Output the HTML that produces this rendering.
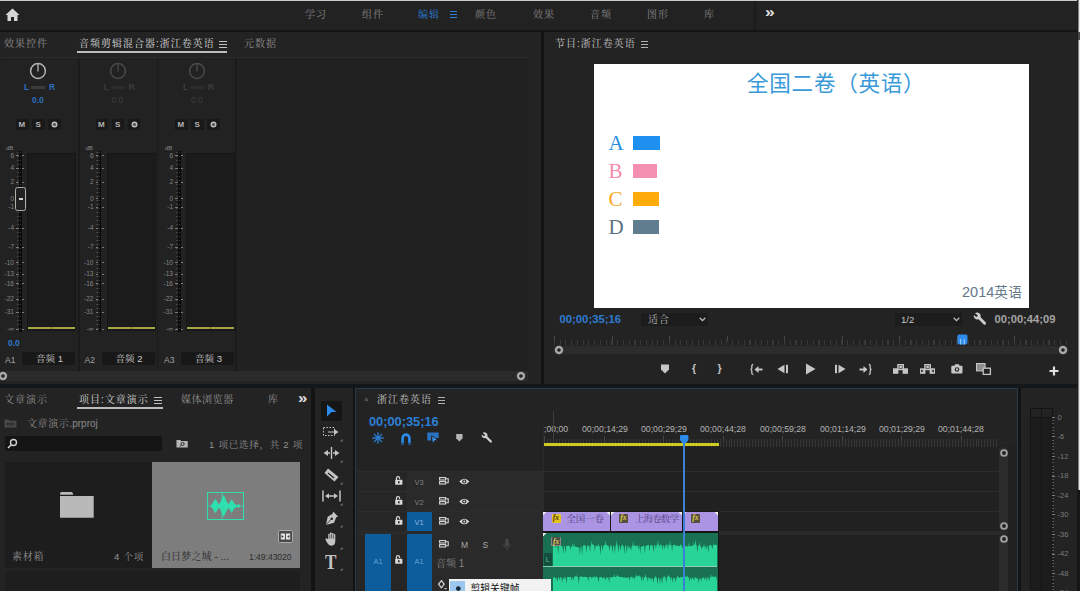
<!DOCTYPE html><html lang="zh"><head><meta charset="utf-8"><title>Premiere Pro</title><style>
*{margin:0;padding:0;box-sizing:border-box}
html,body{width:1080px;height:591px;overflow:hidden;background:#232323}
body{position:relative;font-family:"Liberation Sans","Noto Sans CJK SC",sans-serif;font-size:10px;color:#9a9a9a}
.a{position:absolute}
.t{position:absolute;white-space:nowrap;line-height:1}
.cj{font-family:"Liberation Sans","Noto Serif CJK SC",serif}
.sc{font-family:"Liberation Sans","Noto Sans CJK SC",sans-serif}
svg{position:absolute;overflow:visible}
</style></head><body>
<div class="a" style="left:0px;top:0px;width:1080px;height:31px;background:#222222;"></div>
<div class="a" style="left:0px;top:0px;width:1080px;height:1px;background:#c9c9c9;"></div>
<div class="a" style="left:0px;top:30px;width:1080px;height:2px;background:#141414;"></div>
<svg style="left:4.5px;top:8.3px" width="15" height="14" viewBox="0 0 15 14"><path d="M7.5 0.5 L14.5 7 H12.5 V13 H9 V9 H6 V13 H2.5 V7 H0.5 Z" fill="#d6d6d6"/></svg>
<div class="t cj" style="left:305px;top:9.5px;font-size:10px;color:#858585;letter-spacing:1px">学习</div>
<div class="t cj" style="left:362px;top:9.5px;font-size:10px;color:#858585;letter-spacing:1px">组件</div>
<div class="t cj" style="left:418px;top:9.5px;font-size:10px;color:#2a7fd8;letter-spacing:1px">编辑</div>
<div class="t cj" style="left:475px;top:9.5px;font-size:10px;color:#858585;letter-spacing:1px">颜色</div>
<div class="t cj" style="left:533px;top:9.5px;font-size:10px;color:#858585;letter-spacing:1px">效果</div>
<div class="t cj" style="left:590px;top:9.5px;font-size:10px;color:#858585;letter-spacing:1px">音频</div>
<div class="t cj" style="left:647px;top:9.5px;font-size:10px;color:#858585;letter-spacing:1px">图形</div>
<div class="t cj" style="left:704px;top:9.5px;font-size:10px;color:#858585;letter-spacing:1px">库</div>
<div class="a" style="left:450px;top:11px;width:7px;height:1px;background:#2a7fd8;"></div>
<div class="a" style="left:450px;top:14px;width:7px;height:1px;background:#2a7fd8;"></div>
<div class="a" style="left:450px;top:17px;width:7px;height:1px;background:#2a7fd8;"></div>
<div class="a" style="left:753.5px;top:1px;width:2px;height:29px;background:#1b1b1b;"></div>
<div class="t sc" style="left:765.3px;top:5.4px;font-size:14.5px;color:#e0e0e0;font-weight:bold;transform:scaleX(1.2);transform-origin:left top">»</div>
<div class="a" style="left:0px;top:32px;width:541px;height:351px;background:#232323;"></div>
<div class="t cj" style="left:4px;top:38.5px;font-size:10px;color:#8f8f8f;letter-spacing:1px">效果控件</div>
<div class="t cj" style="left:79px;top:38.5px;font-size:10px;color:#d8d8d8;letter-spacing:1px">音频剪辑混合器:浙江卷英语</div>
<div class="a" style="left:219px;top:41px;width:8px;height:1px;background:#c0c0c0;"></div>
<div class="a" style="left:219px;top:44px;width:8px;height:1px;background:#c0c0c0;"></div>
<div class="a" style="left:219px;top:47px;width:8px;height:1px;background:#c0c0c0;"></div>
<div class="a" style="left:77px;top:51px;width:150px;height:2px;background:#bcbcbc;"></div>
<div class="t cj" style="left:244px;top:38.5px;font-size:10px;color:#8f8f8f;letter-spacing:1px">元数据</div>
<div class="a" style="left:0px;top:57px;width:528px;height:314px;background:#212121;"></div>
<div class="a" style="left:0px;top:57px;width:528px;height:1px;background:#2a2a2a;"></div>
<div class="a" style="left:1.5px;top:58px;width:77px;height:313px;background:#222222;"></div>
<div class="a" style="left:78.0px;top:58px;width:1.5px;height:313px;background:#1b1b1b;"></div>
<svg style="left:29px;top:62px" width="18" height="18" viewBox="0 0 18 18"><circle cx="9" cy="9" r="7.4" fill="none" stroke="#b4b4b4" stroke-width="1.5"/><line x1="9" y1="1.5" x2="9" y2="9.5" stroke="#b4b4b4" stroke-width="1.3"/></svg>
<div class="t sc" style="left:24px;top:83px;font-size:8.5px;color:#2b6fbe;font-weight:bold">L</div>
<div class="t sc" style="left:49px;top:83px;font-size:8.5px;color:#2b6fbe;font-weight:bold">R</div>
<div class="a" style="left:31px;top:86px;width:14px;height:3px;background:#3c3c3c;"></div>
<div class="t sc" style="left:32px;top:96px;font-size:8.5px;color:#2b6fbe;font-weight:bold">0.0</div>
<div class="a" style="left:16px;top:118.7px;width:12.5px;height:11.3px;background:#191919;"></div>
<div class="t sc" style="left:18.5px;top:121px;font-size:8px;color:#b4b4b4;font-weight:bold">M</div>
<div class="a" style="left:32px;top:118.7px;width:12.5px;height:11.3px;background:#191919;"></div>
<div class="t sc" style="left:35.5px;top:121px;font-size:8px;color:#b4b4b4;font-weight:bold">S</div>
<div class="a" style="left:48px;top:118.7px;width:12.5px;height:11.3px;background:#191919;"></div>
<svg style="left:51px;top:121px" width="7" height="7" viewBox="0 0 7 7"><circle cx="3.5" cy="3.5" r="2.3" fill="#555" stroke="#bdbdbd" stroke-width="1.4"/></svg>
<div class="t sc" style="left:6px;top:145px;font-size:6px;color:#8a8a8a;">dB</div>
<div class="a" style="left:19px;top:151px;width:2.6px;height:181px;background:#0a0a0a;"></div>
<div class="a" style="left:16.5px;top:152px;width:7px;height:178px;background:repeating-linear-gradient(to bottom,#9a9a9a 0,#9a9a9a 1px,transparent 1px,transparent 4px);opacity:.3;clip-path:polygon(0 0,2px 0,2px 100%,0 100%)"></div>
<div class="a" style="left:19.8px;top:152px;width:1px;height:178px;background:repeating-linear-gradient(to bottom,#888 0,#888 1px,transparent 1px,transparent 4px);opacity:.45"></div>
<div class="t sc" style="left:0px;width:14px;text-align:right;top:152.7px;font-size:6.5px;color:#858585">6</div>
<div class="a" style="left:16px;top:155px;width:2.5px;height:1px;background:#7a7a7a;"></div>
<div class="a" style="left:22px;top:155px;width:2px;height:1px;background:#7a7a7a;"></div>
<div class="t sc" style="left:0px;width:14px;text-align:right;top:165.2px;font-size:6.5px;color:#858585">4</div>
<div class="a" style="left:16px;top:168px;width:2.5px;height:1px;background:#7a7a7a;"></div>
<div class="a" style="left:22px;top:168px;width:2px;height:1px;background:#7a7a7a;"></div>
<div class="t sc" style="left:0px;width:14px;text-align:right;top:179.2px;font-size:6.5px;color:#858585">2</div>
<div class="a" style="left:16px;top:182px;width:2.5px;height:1px;background:#7a7a7a;"></div>
<div class="a" style="left:22px;top:182px;width:2px;height:1px;background:#7a7a7a;"></div>
<div class="t sc" style="left:0px;width:14px;text-align:right;top:195.7px;font-size:6.5px;color:#858585">0</div>
<div class="a" style="left:16px;top:198px;width:2.5px;height:1px;background:#7a7a7a;"></div>
<div class="a" style="left:22px;top:198px;width:2px;height:1px;background:#7a7a7a;"></div>
<div class="t sc" style="left:0px;width:14px;text-align:right;top:204.2px;font-size:6.5px;color:#858585">-1</div>
<div class="a" style="left:16px;top:207px;width:2.5px;height:1px;background:#7a7a7a;"></div>
<div class="a" style="left:22px;top:207px;width:2px;height:1px;background:#7a7a7a;"></div>
<div class="t sc" style="left:0px;width:14px;text-align:right;top:225.2px;font-size:6.5px;color:#858585">-4</div>
<div class="a" style="left:16px;top:228px;width:2.5px;height:1px;background:#7a7a7a;"></div>
<div class="a" style="left:22px;top:228px;width:2px;height:1px;background:#7a7a7a;"></div>
<div class="t sc" style="left:0px;width:14px;text-align:right;top:244.2px;font-size:6.5px;color:#858585">-7</div>
<div class="a" style="left:16px;top:247px;width:2.5px;height:1px;background:#7a7a7a;"></div>
<div class="a" style="left:22px;top:247px;width:2px;height:1px;background:#7a7a7a;"></div>
<div class="t sc" style="left:0px;width:14px;text-align:right;top:259.7px;font-size:6.5px;color:#858585">-10</div>
<div class="a" style="left:16px;top:262px;width:2.5px;height:1px;background:#7a7a7a;"></div>
<div class="a" style="left:22px;top:262px;width:2px;height:1px;background:#7a7a7a;"></div>
<div class="t sc" style="left:0px;width:14px;text-align:right;top:271.2px;font-size:6.5px;color:#858585">-13</div>
<div class="a" style="left:16px;top:274px;width:2.5px;height:1px;background:#7a7a7a;"></div>
<div class="a" style="left:22px;top:274px;width:2px;height:1px;background:#7a7a7a;"></div>
<div class="t sc" style="left:0px;width:14px;text-align:right;top:280.7px;font-size:6.5px;color:#858585">-16</div>
<div class="a" style="left:16px;top:283px;width:2.5px;height:1px;background:#7a7a7a;"></div>
<div class="a" style="left:22px;top:283px;width:2px;height:1px;background:#7a7a7a;"></div>
<div class="t sc" style="left:0px;width:14px;text-align:right;top:296.2px;font-size:6.5px;color:#858585">-22</div>
<div class="a" style="left:16px;top:299px;width:2.5px;height:1px;background:#7a7a7a;"></div>
<div class="a" style="left:22px;top:299px;width:2px;height:1px;background:#7a7a7a;"></div>
<div class="t sc" style="left:0px;width:14px;text-align:right;top:309.2px;font-size:6.5px;color:#858585">-31</div>
<div class="a" style="left:16px;top:312px;width:2.5px;height:1px;background:#7a7a7a;"></div>
<div class="a" style="left:22px;top:312px;width:2px;height:1px;background:#7a7a7a;"></div>
<div class="t sc" style="left:0px;width:14px;text-align:right;top:326.2px;font-size:6.5px;color:#858585">-∞</div>
<div class="a" style="left:16px;top:329px;width:2.5px;height:1px;background:#7a7a7a;"></div>
<div class="a" style="left:22px;top:329px;width:2px;height:1px;background:#7a7a7a;"></div>
<div class="a" style="left:27px;top:153px;width:49px;height:178px;background:#161616;"></div>
<div class="a" style="left:28px;top:154px;width:47px;height:176px;background:#1b1b1b;"></div>
<div class="a" style="left:28px;top:327px;width:47px;height:2px;background:#a3a544;"></div>
<div class="a" style="left:51px;top:327px;width:1px;height:2px;background:#6c6e30;"></div>
<div class="a" style="left:15px;top:187px;width:11px;height:24px;border:1.3px solid #b0b0b0;border-radius:2.5px;background:#222"></div>
<div class="a" style="left:18.5px;top:198px;width:4px;height:1.5px;background:#d0d0d0;"></div>
<div class="t sc" style="left:5px;top:355.5px;font-size:8.5px;color:#a0a0a0;">A1</div>
<div class="a" style="left:22px;top:352px;width:53px;height:13px;background:#181818;"></div>
<div class="t cj" style="left:36px;top:354px;font-size:9.5px;color:#c8c8c8;">音频 1</div>
<div class="a" style="left:80px;top:58px;width:77px;height:313px;background:#222222;"></div>
<div class="a" style="left:156.5px;top:58px;width:1.5px;height:313px;background:#1b1b1b;"></div>
<svg style="left:108.5px;top:62px" width="18" height="18" viewBox="0 0 18 18"><circle cx="9" cy="9" r="7.4" fill="none" stroke="#4a4a4a" stroke-width="1.5"/><line x1="9" y1="1.5" x2="9" y2="9.5" stroke="#4a4a4a" stroke-width="1.3"/></svg>
<div class="t sc" style="left:103.5px;top:83px;font-size:8.5px;color:#3d3d3d;font-weight:bold">L</div>
<div class="t sc" style="left:128.5px;top:83px;font-size:8.5px;color:#3d3d3d;font-weight:bold">R</div>
<div class="a" style="left:110.5px;top:86px;width:14px;height:3px;background:#2c2c2c;"></div>
<div class="t sc" style="left:111.5px;top:96px;font-size:8.5px;color:#3d3d3d;">0.0</div>
<div class="a" style="left:95.5px;top:118.7px;width:12.5px;height:11.3px;background:#191919;"></div>
<div class="t sc" style="left:98.0px;top:121px;font-size:8px;color:#b4b4b4;font-weight:bold">M</div>
<div class="a" style="left:111.5px;top:118.7px;width:12.5px;height:11.3px;background:#191919;"></div>
<div class="t sc" style="left:115.0px;top:121px;font-size:8px;color:#b4b4b4;font-weight:bold">S</div>
<div class="a" style="left:127.5px;top:118.7px;width:12.5px;height:11.3px;background:#191919;"></div>
<svg style="left:130.5px;top:121px" width="7" height="7" viewBox="0 0 7 7"><circle cx="3.5" cy="3.5" r="2.3" fill="#555" stroke="#bdbdbd" stroke-width="1.4"/></svg>
<div class="t sc" style="left:85.5px;top:145px;font-size:6px;color:#8a8a8a;">dB</div>
<div class="a" style="left:98.5px;top:151px;width:2.6px;height:181px;background:#0a0a0a;"></div>
<div class="a" style="left:96.0px;top:152px;width:7px;height:178px;background:repeating-linear-gradient(to bottom,#9a9a9a 0,#9a9a9a 1px,transparent 1px,transparent 4px);opacity:.3;clip-path:polygon(0 0,2px 0,2px 100%,0 100%)"></div>
<div class="a" style="left:99.3px;top:152px;width:1px;height:178px;background:repeating-linear-gradient(to bottom,#888 0,#888 1px,transparent 1px,transparent 4px);opacity:.45"></div>
<div class="t sc" style="left:79.5px;width:14px;text-align:right;top:152.7px;font-size:6.5px;color:#858585">6</div>
<div class="a" style="left:95.5px;top:155px;width:2.5px;height:1px;background:#7a7a7a;"></div>
<div class="a" style="left:101.5px;top:155px;width:2px;height:1px;background:#7a7a7a;"></div>
<div class="t sc" style="left:79.5px;width:14px;text-align:right;top:165.2px;font-size:6.5px;color:#858585">4</div>
<div class="a" style="left:95.5px;top:168px;width:2.5px;height:1px;background:#7a7a7a;"></div>
<div class="a" style="left:101.5px;top:168px;width:2px;height:1px;background:#7a7a7a;"></div>
<div class="t sc" style="left:79.5px;width:14px;text-align:right;top:179.2px;font-size:6.5px;color:#858585">2</div>
<div class="a" style="left:95.5px;top:182px;width:2.5px;height:1px;background:#7a7a7a;"></div>
<div class="a" style="left:101.5px;top:182px;width:2px;height:1px;background:#7a7a7a;"></div>
<div class="t sc" style="left:79.5px;width:14px;text-align:right;top:195.7px;font-size:6.5px;color:#858585">0</div>
<div class="a" style="left:95.5px;top:198px;width:2.5px;height:1px;background:#7a7a7a;"></div>
<div class="a" style="left:101.5px;top:198px;width:2px;height:1px;background:#7a7a7a;"></div>
<div class="t sc" style="left:79.5px;width:14px;text-align:right;top:204.2px;font-size:6.5px;color:#858585">-1</div>
<div class="a" style="left:95.5px;top:207px;width:2.5px;height:1px;background:#7a7a7a;"></div>
<div class="a" style="left:101.5px;top:207px;width:2px;height:1px;background:#7a7a7a;"></div>
<div class="t sc" style="left:79.5px;width:14px;text-align:right;top:225.2px;font-size:6.5px;color:#858585">-4</div>
<div class="a" style="left:95.5px;top:228px;width:2.5px;height:1px;background:#7a7a7a;"></div>
<div class="a" style="left:101.5px;top:228px;width:2px;height:1px;background:#7a7a7a;"></div>
<div class="t sc" style="left:79.5px;width:14px;text-align:right;top:244.2px;font-size:6.5px;color:#858585">-7</div>
<div class="a" style="left:95.5px;top:247px;width:2.5px;height:1px;background:#7a7a7a;"></div>
<div class="a" style="left:101.5px;top:247px;width:2px;height:1px;background:#7a7a7a;"></div>
<div class="t sc" style="left:79.5px;width:14px;text-align:right;top:259.7px;font-size:6.5px;color:#858585">-10</div>
<div class="a" style="left:95.5px;top:262px;width:2.5px;height:1px;background:#7a7a7a;"></div>
<div class="a" style="left:101.5px;top:262px;width:2px;height:1px;background:#7a7a7a;"></div>
<div class="t sc" style="left:79.5px;width:14px;text-align:right;top:271.2px;font-size:6.5px;color:#858585">-13</div>
<div class="a" style="left:95.5px;top:274px;width:2.5px;height:1px;background:#7a7a7a;"></div>
<div class="a" style="left:101.5px;top:274px;width:2px;height:1px;background:#7a7a7a;"></div>
<div class="t sc" style="left:79.5px;width:14px;text-align:right;top:280.7px;font-size:6.5px;color:#858585">-16</div>
<div class="a" style="left:95.5px;top:283px;width:2.5px;height:1px;background:#7a7a7a;"></div>
<div class="a" style="left:101.5px;top:283px;width:2px;height:1px;background:#7a7a7a;"></div>
<div class="t sc" style="left:79.5px;width:14px;text-align:right;top:296.2px;font-size:6.5px;color:#858585">-22</div>
<div class="a" style="left:95.5px;top:299px;width:2.5px;height:1px;background:#7a7a7a;"></div>
<div class="a" style="left:101.5px;top:299px;width:2px;height:1px;background:#7a7a7a;"></div>
<div class="t sc" style="left:79.5px;width:14px;text-align:right;top:309.2px;font-size:6.5px;color:#858585">-31</div>
<div class="a" style="left:95.5px;top:312px;width:2.5px;height:1px;background:#7a7a7a;"></div>
<div class="a" style="left:101.5px;top:312px;width:2px;height:1px;background:#7a7a7a;"></div>
<div class="t sc" style="left:79.5px;width:14px;text-align:right;top:326.2px;font-size:6.5px;color:#858585">-∞</div>
<div class="a" style="left:95.5px;top:329px;width:2.5px;height:1px;background:#7a7a7a;"></div>
<div class="a" style="left:101.5px;top:329px;width:2px;height:1px;background:#7a7a7a;"></div>
<div class="a" style="left:106.5px;top:153px;width:49px;height:178px;background:#161616;"></div>
<div class="a" style="left:107.5px;top:154px;width:47px;height:176px;background:#1b1b1b;"></div>
<div class="a" style="left:107.5px;top:327px;width:47px;height:2px;background:#a3a544;"></div>
<div class="a" style="left:130.5px;top:327px;width:1px;height:2px;background:#6c6e30;"></div>
<div class="t sc" style="left:84.5px;top:355.5px;font-size:8.5px;color:#a0a0a0;">A2</div>
<div class="a" style="left:101.5px;top:352px;width:53px;height:13px;background:#181818;"></div>
<div class="t cj" style="left:115.5px;top:354px;font-size:9.5px;color:#c8c8c8;">音频 2</div>
<div class="a" style="left:158.5px;top:58px;width:77px;height:313px;background:#222222;"></div>
<div class="a" style="left:235.0px;top:58px;width:1.5px;height:313px;background:#1b1b1b;"></div>
<svg style="left:188px;top:62px" width="18" height="18" viewBox="0 0 18 18"><circle cx="9" cy="9" r="7.4" fill="none" stroke="#4a4a4a" stroke-width="1.5"/><line x1="9" y1="1.5" x2="9" y2="9.5" stroke="#4a4a4a" stroke-width="1.3"/></svg>
<div class="t sc" style="left:183px;top:83px;font-size:8.5px;color:#3d3d3d;font-weight:bold">L</div>
<div class="t sc" style="left:208px;top:83px;font-size:8.5px;color:#3d3d3d;font-weight:bold">R</div>
<div class="a" style="left:190px;top:86px;width:14px;height:3px;background:#2c2c2c;"></div>
<div class="t sc" style="left:191px;top:96px;font-size:8.5px;color:#3d3d3d;">0.0</div>
<div class="a" style="left:175px;top:118.7px;width:12.5px;height:11.3px;background:#191919;"></div>
<div class="t sc" style="left:177.5px;top:121px;font-size:8px;color:#b4b4b4;font-weight:bold">M</div>
<div class="a" style="left:191px;top:118.7px;width:12.5px;height:11.3px;background:#191919;"></div>
<div class="t sc" style="left:194.5px;top:121px;font-size:8px;color:#b4b4b4;font-weight:bold">S</div>
<div class="a" style="left:207px;top:118.7px;width:12.5px;height:11.3px;background:#191919;"></div>
<svg style="left:210px;top:121px" width="7" height="7" viewBox="0 0 7 7"><circle cx="3.5" cy="3.5" r="2.3" fill="#555" stroke="#bdbdbd" stroke-width="1.4"/></svg>
<div class="t sc" style="left:165px;top:145px;font-size:6px;color:#8a8a8a;">dB</div>
<div class="a" style="left:178px;top:151px;width:2.6px;height:181px;background:#0a0a0a;"></div>
<div class="a" style="left:175.5px;top:152px;width:7px;height:178px;background:repeating-linear-gradient(to bottom,#9a9a9a 0,#9a9a9a 1px,transparent 1px,transparent 4px);opacity:.3;clip-path:polygon(0 0,2px 0,2px 100%,0 100%)"></div>
<div class="a" style="left:178.8px;top:152px;width:1px;height:178px;background:repeating-linear-gradient(to bottom,#888 0,#888 1px,transparent 1px,transparent 4px);opacity:.45"></div>
<div class="t sc" style="left:159px;width:14px;text-align:right;top:152.7px;font-size:6.5px;color:#858585">6</div>
<div class="a" style="left:175px;top:155px;width:2.5px;height:1px;background:#7a7a7a;"></div>
<div class="a" style="left:181px;top:155px;width:2px;height:1px;background:#7a7a7a;"></div>
<div class="t sc" style="left:159px;width:14px;text-align:right;top:165.2px;font-size:6.5px;color:#858585">4</div>
<div class="a" style="left:175px;top:168px;width:2.5px;height:1px;background:#7a7a7a;"></div>
<div class="a" style="left:181px;top:168px;width:2px;height:1px;background:#7a7a7a;"></div>
<div class="t sc" style="left:159px;width:14px;text-align:right;top:179.2px;font-size:6.5px;color:#858585">2</div>
<div class="a" style="left:175px;top:182px;width:2.5px;height:1px;background:#7a7a7a;"></div>
<div class="a" style="left:181px;top:182px;width:2px;height:1px;background:#7a7a7a;"></div>
<div class="t sc" style="left:159px;width:14px;text-align:right;top:195.7px;font-size:6.5px;color:#858585">0</div>
<div class="a" style="left:175px;top:198px;width:2.5px;height:1px;background:#7a7a7a;"></div>
<div class="a" style="left:181px;top:198px;width:2px;height:1px;background:#7a7a7a;"></div>
<div class="t sc" style="left:159px;width:14px;text-align:right;top:204.2px;font-size:6.5px;color:#858585">-1</div>
<div class="a" style="left:175px;top:207px;width:2.5px;height:1px;background:#7a7a7a;"></div>
<div class="a" style="left:181px;top:207px;width:2px;height:1px;background:#7a7a7a;"></div>
<div class="t sc" style="left:159px;width:14px;text-align:right;top:225.2px;font-size:6.5px;color:#858585">-4</div>
<div class="a" style="left:175px;top:228px;width:2.5px;height:1px;background:#7a7a7a;"></div>
<div class="a" style="left:181px;top:228px;width:2px;height:1px;background:#7a7a7a;"></div>
<div class="t sc" style="left:159px;width:14px;text-align:right;top:244.2px;font-size:6.5px;color:#858585">-7</div>
<div class="a" style="left:175px;top:247px;width:2.5px;height:1px;background:#7a7a7a;"></div>
<div class="a" style="left:181px;top:247px;width:2px;height:1px;background:#7a7a7a;"></div>
<div class="t sc" style="left:159px;width:14px;text-align:right;top:259.7px;font-size:6.5px;color:#858585">-10</div>
<div class="a" style="left:175px;top:262px;width:2.5px;height:1px;background:#7a7a7a;"></div>
<div class="a" style="left:181px;top:262px;width:2px;height:1px;background:#7a7a7a;"></div>
<div class="t sc" style="left:159px;width:14px;text-align:right;top:271.2px;font-size:6.5px;color:#858585">-13</div>
<div class="a" style="left:175px;top:274px;width:2.5px;height:1px;background:#7a7a7a;"></div>
<div class="a" style="left:181px;top:274px;width:2px;height:1px;background:#7a7a7a;"></div>
<div class="t sc" style="left:159px;width:14px;text-align:right;top:280.7px;font-size:6.5px;color:#858585">-16</div>
<div class="a" style="left:175px;top:283px;width:2.5px;height:1px;background:#7a7a7a;"></div>
<div class="a" style="left:181px;top:283px;width:2px;height:1px;background:#7a7a7a;"></div>
<div class="t sc" style="left:159px;width:14px;text-align:right;top:296.2px;font-size:6.5px;color:#858585">-22</div>
<div class="a" style="left:175px;top:299px;width:2.5px;height:1px;background:#7a7a7a;"></div>
<div class="a" style="left:181px;top:299px;width:2px;height:1px;background:#7a7a7a;"></div>
<div class="t sc" style="left:159px;width:14px;text-align:right;top:309.2px;font-size:6.5px;color:#858585">-31</div>
<div class="a" style="left:175px;top:312px;width:2.5px;height:1px;background:#7a7a7a;"></div>
<div class="a" style="left:181px;top:312px;width:2px;height:1px;background:#7a7a7a;"></div>
<div class="t sc" style="left:159px;width:14px;text-align:right;top:326.2px;font-size:6.5px;color:#858585">-∞</div>
<div class="a" style="left:175px;top:329px;width:2.5px;height:1px;background:#7a7a7a;"></div>
<div class="a" style="left:181px;top:329px;width:2px;height:1px;background:#7a7a7a;"></div>
<div class="a" style="left:186px;top:153px;width:49px;height:178px;background:#161616;"></div>
<div class="a" style="left:187px;top:154px;width:47px;height:176px;background:#1b1b1b;"></div>
<div class="a" style="left:187px;top:327px;width:47px;height:2px;background:#a3a544;"></div>
<div class="a" style="left:210px;top:327px;width:1px;height:2px;background:#6c6e30;"></div>
<div class="t sc" style="left:164px;top:355.5px;font-size:8.5px;color:#a0a0a0;">A3</div>
<div class="a" style="left:181px;top:352px;width:53px;height:13px;background:#181818;"></div>
<div class="t cj" style="left:195px;top:354px;font-size:9.5px;color:#c8c8c8;">音频 3</div>
<div class="t sc" style="left:8px;top:338.5px;font-size:8.5px;color:#2d7bd0;font-weight:bold">0.0</div>
<div class="a" style="left:0px;top:371px;width:528px;height:9.5px;background:#2b2b2b;"></div>
<svg style="left:-1px;top:371.5px" width="8" height="8" viewBox="0 0 8 8"><circle cx="4" cy="4" r="3" fill="#232323" stroke="#a8a8a8" stroke-width="2.4"/></svg>
<svg style="left:517px;top:371.5px" width="8" height="8" viewBox="0 0 8 8"><circle cx="4" cy="4" r="3" fill="#232323" stroke="#a8a8a8" stroke-width="2.4"/></svg>
<div class="a" style="left:541px;top:32px;width:3px;height:353px;background:#131313;"></div>
<div class="a" style="left:0px;top:384px;width:1080px;height:4px;background:#14171a;"></div>
<div class="a" style="left:544px;top:32px;width:536px;height:351px;background:#232323;"></div>
<div class="t cj" style="left:555px;top:38.5px;font-size:10px;color:#c8c8c8;letter-spacing:1px">节目:浙江卷英语</div>
<div class="a" style="left:641px;top:41px;width:7px;height:1px;background:#b0b0b0;"></div>
<div class="a" style="left:641px;top:44px;width:7px;height:1px;background:#b0b0b0;"></div>
<div class="a" style="left:641px;top:47px;width:7px;height:1px;background:#b0b0b0;"></div>
<div class="a" style="left:594px;top:64px;width:435px;height:244px;background:#ffffff;"></div>
<div class="t sc" style="left:747px;top:72.5px;font-size:21.6px;color:#3a9ad9;letter-spacing:0.7px">全国二卷（英语）</div>
<div class="t" style="left:608.5px;top:133px;font-size:21px;color:#2a8fe0;font-family:'Liberation Serif',serif">A</div>
<div class="a" style="left:633px;top:136px;width:27px;height:14px;background:#1e90f0;"></div>
<div class="t" style="left:608.5px;top:161px;font-size:21px;color:#f28cab;font-family:'Liberation Serif',serif">B</div>
<div class="a" style="left:633px;top:164px;width:23.5px;height:14px;background:#f48fb1;"></div>
<div class="t" style="left:608.5px;top:188.5px;font-size:21px;color:#f6a821;font-family:'Liberation Serif',serif">C</div>
<div class="a" style="left:633px;top:191.5px;width:25.5px;height:14px;background:#ffab0a;"></div>
<div class="t" style="left:608.5px;top:217.0px;font-size:21px;color:#5a7383;font-family:'Liberation Serif',serif">D</div>
<div class="a" style="left:633px;top:219.5px;width:25.5px;height:14px;background:#5f7d8e;"></div>
<div class="t sc" style="left:962px;top:284.5px;font-size:14.5px;color:#64798a;">2014<span style="font-size:13.6px;letter-spacing:0.3px">英语</span></div>
<div class="t sc" style="left:559.5px;top:313.8px;font-size:11.3px;color:#2f7bd0;font-weight:bold">00;00;35;16</div>
<div class="a" style="left:641px;top:312.6px;width:66.5px;height:13.6px;background:#1c1c1c;"></div>
<div class="t cj" style="left:648px;top:314.5px;font-size:10px;color:#b4b4b4;letter-spacing:1px">适合</div>
<svg style="left:698.7px;top:316.8px" width="7" height="5" viewBox="0 0 7 5"><path d="M0.7 0.8 L3.5 3.6 L6.3 0.8" fill="none" stroke="#bcbcbc" stroke-width="1.3"/></svg>
<div class="a" style="left:895px;top:312.6px;width:66.5px;height:13.6px;background:#1c1c1c;"></div>
<div class="t sc" style="left:901px;top:314.5px;font-size:9.5px;color:#c4c4c4;">1/2</div>
<svg style="left:953px;top:316.8px" width="7" height="5" viewBox="0 0 7 5"><path d="M0.7 0.8 L3.5 3.6 L6.3 0.8" fill="none" stroke="#bcbcbc" stroke-width="1.3"/></svg>
<svg style="left:973px;top:312px" width="13" height="13" viewBox="0 0 13 13"><path d="M2 1.2 A3.6 3.6 0 0 1 7.6 5.2 L12.6 10.2 A1.3 1.3 0 0 1 10.6 12.2 L5.6 7.2 A3.6 3.6 0 0 1 0.8 3 L3.4 5 L5 3.6 Z" fill="#cfcfcf"/></svg>
<div class="t sc" style="left:994.5px;top:313.8px;font-size:11.2px;color:#a4a4a4;font-weight:bold">00;00;44;09</div>
<div class="a" style="left:553.5px;top:340px;width:516px;height:5px;background:repeating-linear-gradient(to right,#393939 0,#393939 1px,transparent 1px,transparent 5.75px)"></div>
<div class="a" style="left:553.5px;top:336px;width:516px;height:5px;background:repeating-linear-gradient(to right,#464646 0,#464646 1px,transparent 1px,transparent 57.5px)"></div>
<div class="a" style="left:553px;top:346px;width:516px;height:8px;background:#2c2c2c;border-radius:4px"></div>
<svg style="left:555px;top:346px" width="8" height="8" viewBox="0 0 8 8"><circle cx="4" cy="4" r="3" fill="#232323" stroke="#a8a8a8" stroke-width="2.4"/></svg>
<svg style="left:1059px;top:346px" width="8" height="8" viewBox="0 0 8 8"><circle cx="4" cy="4" r="3" fill="#232323" stroke="#a8a8a8" stroke-width="2.4"/></svg>
<svg style="left:957px;top:334px" width="11" height="11" viewBox="0 0 11 11"><path d="M0.5 2 Q0.5 0.5 2 0.5 H9 Q10.5 0.5 10.5 2 V8 Q10.5 10.5 8.5 10.5 H2.5 Q0.5 10.5 0.5 8 Z" fill="#2d8ceb"/><path d="M3.7 5 V10.5 M7.3 5 V10.5" stroke="#9fd0fa" stroke-width="1"/></svg>
<svg style="left:660px;top:364px" width="10" height="10" viewBox="0 0 10 10"><path d="M1 0.5 H9 V5.5 L5 9.5 L1 5.5 Z" fill="#c6c6c6"/></svg>
<div class="t sc" style="left:692px;top:363px;font-size:10.5px;color:#c6c6c6;font-weight:bold">{</div>
<div class="t sc" style="left:717.5px;top:363px;font-size:10.5px;color:#c6c6c6;font-weight:bold">}</div>
<svg style="left:750px;top:364px" width="13" height="11" viewBox="0 0 13 11"><path d="M3.2 0.5 Q1.8 0.5 1.8 2 V4 Q1.8 5.3 0.6 5.5 Q1.8 5.7 1.8 7 V9 Q1.8 10.5 3.2 10.5" fill="none" stroke="#c6c6c6" stroke-width="1.3"/><path d="M4.5 5.5 L8.5 2 V4.4 H12.5 V6.6 H8.5 V9 Z" fill="#c6c6c6"/></svg>
<svg style="left:777px;top:364px" width="12" height="10" viewBox="0 0 12 10"><path d="M0.5 5 L7.5 0.8 V9.2 Z" fill="#c6c6c6"/><rect x="9" y="0.8" width="2" height="8.4" fill="#c6c6c6"/></svg>
<svg style="left:805px;top:363px" width="11" height="12" viewBox="0 0 11 12"><path d="M1 0.5 L10.5 6 L1 11.5 Z" fill="#c6c6c6"/></svg>
<svg style="left:833.5px;top:364px" width="12" height="10" viewBox="0 0 12 10"><rect x="1" y="0.8" width="2" height="8.4" fill="#c6c6c6"/><path d="M4.5 0.8 L11.5 5 L4.5 9.2 Z" fill="#c6c6c6"/></svg>
<svg style="left:859px;top:364px" width="13" height="11" viewBox="0 0 13 11"><path d="M0.5 4.4 H4.5 V2 L8.5 5.5 L4.5 9 V6.6 H0.5 Z" fill="#c6c6c6"/><path d="M9.8 0.5 Q11.2 0.5 11.2 2 V4 Q11.2 5.3 12.4 5.5 Q11.2 5.7 11.2 7 V9 Q11.2 10.5 9.8 10.5" fill="none" stroke="#c6c6c6" stroke-width="1.3"/></svg>
<svg style="left:893px;top:363.6px" width="15" height="10" viewBox="0 0 15 10"><rect x="4.8" y="0.6" width="5.6" height="5" fill="#6a6a6a" stroke="#c6c6c6" stroke-width="1.2"/><rect x="0" y="4.3" width="5.4" height="5.5" fill="#c6c6c6"/><rect x="9.6" y="4.3" width="5.4" height="5.5" fill="#c6c6c6"/><rect x="6.6" y="2" width="2.2" height="2" fill="#c6c6c6"/></svg>
<svg style="left:920.3px;top:363.6px" width="15" height="10" viewBox="0 0 15 10"><rect x="4.8" y="0.6" width="5.6" height="5" fill="#6a6a6a" stroke="#c6c6c6" stroke-width="1.2"/><rect x="0" y="4.3" width="5.4" height="5.5" fill="#c6c6c6"/><rect x="9.6" y="4.3" width="5.4" height="5.5" fill="#c6c6c6"/><rect x="6.6" y="2" width="2.2" height="2" fill="#c6c6c6"/><path d="M1.2 5.6 L3.6 7 L1.2 8.4 Z M13.8 5.6 L11.4 7 L13.8 8.4 Z" fill="#232323"/></svg>
<svg style="left:950.8px;top:363.8px" width="12" height="10" viewBox="0 0 12 10"><path d="M1.2 1.8 H3.4 L4.2 0.3 H7.8 L8.6 1.8 H10.6 Q11.5 1.8 11.5 2.7 V8.6 Q11.5 9.5 10.6 9.5 H1.2 Q0.3 9.5 0.3 8.6 V2.7 Q0.3 1.8 1.2 1.8 Z" fill="#c6c6c6"/><circle cx="6" cy="5.5" r="2.3" fill="#232323"/><circle cx="6" cy="5.5" r="1.15" fill="#c6c6c6"/></svg>
<svg style="left:976px;top:363px" width="15" height="12" viewBox="0 0 15 12"><rect x="0.5" y="0.5" width="8.6" height="7.4" fill="#8e8e8e" stroke="#c6c6c6" stroke-width="1"/><rect x="7.2" y="5.2" width="7.2" height="6.2" fill="#232323" stroke="#c6c6c6" stroke-width="1.3"/></svg>
<svg style="left:1048.5px;top:366px" width="10" height="10" viewBox="0 0 10 10"><path d="M5 0.5 V9.5 M0.5 5 H9.5" stroke="#e0e0e0" stroke-width="2.2"/></svg>
<div class="a" style="left:0px;top:388px;width:311px;height:203px;background:#232323;"></div>
<div class="t cj" style="left:4px;top:394.5px;font-size:10px;color:#8f8f8f;letter-spacing:1px">文章演示</div>
<div class="t cj" style="left:79px;top:394.5px;font-size:10px;color:#d8d8d8;letter-spacing:1px">项目:文章演示</div>
<div class="a" style="left:154px;top:397px;width:8px;height:1px;background:#c0c0c0;"></div>
<div class="a" style="left:154px;top:400px;width:8px;height:1px;background:#c0c0c0;"></div>
<div class="a" style="left:154px;top:403px;width:8px;height:1px;background:#c0c0c0;"></div>
<div class="a" style="left:76.5px;top:406.5px;width:86px;height:2px;background:#bcbcbc;"></div>
<div class="t cj" style="left:181px;top:394.5px;font-size:10px;color:#8f8f8f;letter-spacing:0.55px">媒体浏览器</div>
<div class="t cj" style="left:268px;top:394.5px;font-size:10px;color:#8f8f8f;">库</div>
<div class="t sc" style="left:297.5px;top:391px;font-size:14px;color:#e0e0e0;font-weight:bold;transform:scaleX(1.2);transform-origin:left top">»</div>
<svg style="left:4px;top:418px" width="13" height="10" viewBox="0 0 13 10"><path d="M0.5 1.5 H4.5 L5.5 2.8 H12.5 V9.5 H0.5 Z" fill="#4a4a4a"/><rect x="2.5" y="4.5" width="8" height="3" fill="#333"/></svg>
<div class="t cj" style="left:27px;top:419px;font-size:10px;color:#8c8c8c;"><span style="letter-spacing:0.6px">文章演示</span>.prproj</div>
<div class="a" style="left:4.5px;top:436.3px;width:157px;height:14.6px;background:#141414;border-radius:2px"></div>
<svg style="left:7.3px;top:438px" width="11" height="11" viewBox="0 0 11 11"><circle cx="6.5" cy="4.5" r="3" fill="none" stroke="#d0d0d0" stroke-width="1.4"/><path d="M4.3 6.7 L1 10" stroke="#d0d0d0" stroke-width="1.6"/></svg>
<svg style="left:176px;top:438.8px" width="13" height="10" viewBox="0 0 13 10"><g transform="scale(0.94 0.9)"><path d="M0.5 1 H4.5 L5.5 2.3 H12.5 V9.5 H0.5 Z" fill="#b4b4b4"/><circle cx="7" cy="5.5" r="1.7" fill="none" stroke="#232323" stroke-width="1"/><path d="M5.8 6.8 L4 8.5" stroke="#232323" stroke-width="1"/></g></svg>
<div class="t cj" style="left:209px;top:439.5px;font-size:9.5px;color:#909090;letter-spacing:0.75px">1 项已选择，共 2 项</div>
<div class="a" style="left:5px;top:461.5px;width:147px;height:106.5px;background:#1d1d1d;"></div>
<svg style="left:60.3px;top:491.8px" width="34" height="26" viewBox="0 0 34 26"><path d="M0 1.5 Q0 0 1.5 0 H11.5 Q13 0 13.3 2.8 H0 Z" fill="#b9b9b9"/><path d="M0 4 H33.7 V25.8 H0 Z" fill="#b9b9b9"/></svg>
<div class="t cj" style="left:12px;top:551.5px;font-size:10px;color:#959595;letter-spacing:0.7px">素材箱</div>
<div class="t cj" style="left:114px;top:552px;font-size:9.5px;color:#959595;letter-spacing:0.8px">4 个项</div>
<div class="a" style="left:152px;top:461.5px;width:148px;height:106.5px;background:#7d7d7d;"></div>
<svg style="left:207px;top:492px" width="37" height="28" viewBox="0 0 37 28"><rect x="0.5" y="0.5" width="36" height="27" fill="none" stroke="#2fe0ae" stroke-width="1"/><path d="M0.5 14 H36.5 M15 0.5 V27.5" stroke="#2fe0ae" stroke-width="0.8"/><polygon points="4.0,13.0 5.2,12.0 6.3,10.0 7.4,8.0 8.6,7.0 9.8,9.0 10.9,11.0 12.0,12.0 13.2,11.0 14.3,8.0 15.5,5.0 16.6,3.0 17.8,5.0 18.9,8.0 20.1,10.0 21.2,12.0 22.4,11.0 23.5,9.0 24.7,7.0 25.8,9.0 27.0,11.0 28.1,12.0 29.3,13.0 30.4,13.0 31.6,12.0 32.8,13.0 32.8,15.0 31.6,16.0 30.4,15.0 29.3,15.0 28.1,16.0 27.0,17.0 25.8,19.0 24.7,21.0 23.5,19.0 22.4,17.0 21.2,16.0 20.1,18.0 18.9,20.0 17.8,23.0 16.6,25.0 15.5,23.0 14.3,20.0 13.2,17.0 12.0,16.0 10.9,17.0 9.8,19.0 8.6,21.0 7.4,20.0 6.3,18.0 5.2,16.0 4.0,15.0" fill="#2fe0ae"/></svg>
<svg style="left:278px;top:530px" width="15" height="13" viewBox="0 0 15 13"><rect x="0.5" y="0.5" width="14" height="12" rx="1.2" fill="#4a4a4a" stroke="#b4b4b4" stroke-width="0.9"/><rect x="2.8" y="3.5" width="4.2" height="6" fill="#e4e4e4"/><rect x="8" y="3.5" width="4.2" height="6" fill="#e4e4e4"/><path d="M3.6 5 L5.8 6.5 L3.6 8 Z M11.4 5 L9.2 6.5 L11.4 8 Z" fill="#3a3a3a"/></svg>
<div class="t cj" style="left:161px;top:551.5px;font-size:10px;color:#2c2c2c;letter-spacing:0.1px">白日梦之城 - ...</div>
<div class="t sc" style="left:249px;top:552.5px;font-size:8.5px;color:#2c2c2c;">1:49:43020</div>
<div class="a" style="left:5px;top:570.5px;width:295px;height:20.5px;background:#1e1e1e;"></div>
<div class="a" style="left:311px;top:388px;width:3.6px;height:203px;background:#131313;"></div>
<div class="a" style="left:314.6px;top:388px;width:38.4px;height:203px;background:#232323;"></div>
<div class="a" style="left:352.5px;top:388px;width:2.5px;height:203px;background:#131313;"></div>
<div class="a" style="left:321px;top:401px;width:21px;height:20px;background:#161616;border-radius:2px"></div>
<svg style="left:326px;top:404px" width="11" height="14" viewBox="0 0 11 14"><path d="M1 0.5 L10.5 8 H5.5 L1 12.5 Z" fill="#2d8ceb"/></svg>
<svg style="left:323px;top:427px" width="18" height="12" viewBox="0 0 18 12"><rect x="0.5" y="0.5" width="11" height="8" fill="none" stroke="#c4c4c4" stroke-width="1" stroke-dasharray="1.5 1.5"/><path d="M5 4.5 H11 V2 L15.5 5 L11 8 V5.5 H5 Z" fill="#c4c4c4"/></svg>
<svg style="left:323px;top:447px" width="17" height="12" viewBox="0 0 17 12"><path d="M8.5 0 V12" stroke="#c4c4c4" stroke-width="1.4"/><path d="M0.5 6 L5 3 V5.2 H7 V6.8 H5 V9 Z M16.5 6 L12 3 V5.2 H10 V6.8 H12 V9 Z" fill="#c4c4c4"/></svg>
<svg style="left:324px;top:468px" width="15" height="14" viewBox="0 0 15 14"><path d="M4 0.5 L14.5 9 L10.5 13.5 L0.5 5 Z" fill="#c4c4c4"/><path d="M4 5 L10 10" stroke="#232323" stroke-width="1.2"/></svg>
<svg style="left:322px;top:490px" width="19" height="12" viewBox="0 0 19 12"><path d="M1 0.5 V11.5 M18 0.5 V11.5" stroke="#c4c4c4" stroke-width="1.5"/><path d="M3 6 L7 3.2 V5.3 H12 V3.2 L16 6 L12 8.8 V6.7 H7 V8.8 Z" fill="#c4c4c4"/></svg>
<svg style="left:324.5px;top:510.8px" width="15" height="16" viewBox="0 0 15 16"><g transform="scale(0.9)"><path d="M9 0.5 L14.5 6 L12.5 7 L10 13 L1 15.5 L3 6.5 L8.5 3 Z" fill="#c4c4c4"/><circle cx="7.5" cy="8.5" r="1.4" fill="#232323"/><path d="M1 15.5 L7 9" stroke="#232323" stroke-width="0.9"/></g></svg>
<svg style="left:325px;top:532px" width="15" height="16" viewBox="0 0 15 16"><g transform="scale(0.92 0.88)"><path d="M3.5 8 V3 Q3.5 2 4.4 2 Q5.3 2 5.3 3 V1.5 Q5.3 0.5 6.3 0.5 Q7.3 0.5 7.3 1.5 V2 Q7.3 1 8.3 1 Q9.3 1 9.3 2 V3 Q9.3 2.2 10.2 2.2 Q11.2 2.2 11.2 3.2 V10 Q11.2 15.5 7 15.5 Q4 15.5 2.5 12.5 L0.5 8.5 Q0.2 7.5 1.2 7.2 Q2 7 2.6 8 Z" fill="#c4c4c4"/><path d="M5.3 3 V7.5 M7.3 2 V7.5 M9.3 3 V7.5" stroke="#232323" stroke-width="0.7"/></g></svg>
<div class="t" style="left:324.8px;top:551.5px;font-size:20px;font-weight:bold;color:#c4c4c4;transform:scaleX(0.86);transform-origin:left top;font-family:'Liberation Serif',serif">T</div>
<svg style="left:339.5px;top:439px" width="3" height="3" viewBox="0 0 3 3"><path d="M2.6 0 V2.6 H0 Z" fill="#767676"/></svg>
<svg style="left:339.5px;top:460px" width="3" height="3" viewBox="0 0 3 3"><path d="M2.6 0 V2.6 H0 Z" fill="#767676"/></svg>
<svg style="left:339.5px;top:482px" width="3" height="3" viewBox="0 0 3 3"><path d="M2.6 0 V2.6 H0 Z" fill="#767676"/></svg>
<svg style="left:339.5px;top:503px" width="3" height="3" viewBox="0 0 3 3"><path d="M2.6 0 V2.6 H0 Z" fill="#767676"/></svg>
<svg style="left:339.5px;top:524.5px" width="3" height="3" viewBox="0 0 3 3"><path d="M2.6 0 V2.6 H0 Z" fill="#767676"/></svg>
<svg style="left:339.5px;top:546.5px" width="3" height="3" viewBox="0 0 3 3"><path d="M2.6 0 V2.6 H0 Z" fill="#767676"/></svg>
<svg style="left:339.5px;top:567.5px" width="3" height="3" viewBox="0 0 3 3"><path d="M2.6 0 V2.6 H0 Z" fill="#767676"/></svg>
<div class="a" style="left:355px;top:388px;width:663px;height:203px;background:#232323;border:1px solid #283a4c;border-bottom:none"></div>
<div class="t sc" style="left:364px;top:395.5px;font-size:8px;color:#7a7a7a;">×</div>
<div class="t cj" style="left:377px;top:394.5px;font-size:10px;color:#c8c8c8;letter-spacing:1px">浙江卷英语</div>
<div class="a" style="left:438px;top:397px;width:7px;height:1px;background:#b0b0b0;"></div>
<div class="a" style="left:438px;top:400px;width:7px;height:1px;background:#b0b0b0;"></div>
<div class="a" style="left:438px;top:403px;width:7px;height:1px;background:#b0b0b0;"></div>
<div class="t sc" style="left:369px;top:415.5px;font-size:12.8px;color:#2d7fd6;font-weight:bold">00;00;35;16</div>
<svg style="left:372px;top:432px" width="12" height="12" viewBox="0 0 12 12"><path d="M6 0.3 V11.7 M0.3 6 H11.7 M2 2 L10 10 M10 2 L2 10" stroke="#2a78cc" stroke-width="1.35"/><circle cx="6" cy="6" r="1.6" fill="#2a78cc"/></svg>
<svg style="left:400.5px;top:433px" width="10" height="12" viewBox="0 0 10 12"><path d="M1.6 11.4 V5 A3.4 3.4 0 0 1 8.4 5 V11.4" fill="none" stroke="#2d8ceb" stroke-width="2.6"/><path d="M0.3 9.6 H2.9 V11.6 H0.3 Z M7.1 9.6 H9.7 V11.6 H7.1 Z" fill="#1a4f8a"/></svg>
<svg style="left:426.5px;top:432px" width="12" height="12" viewBox="0 0 12 12"><path d="M0.3 0.5 H11.7 V6 H7 V4 H4 V8.5 H0.3 Z" fill="#2a74c4"/><path d="M4.6 3.6 L11 8.4 H7.8 L5.6 11.4 Z" fill="#3a9af5" stroke="#232323" stroke-width="0.7"/></svg>
<svg style="left:456.3px;top:434.3px" width="7" height="8" viewBox="0 0 7 8"><path d="M0.2 0 H6.5 V4.2 L3.35 7.4 L0.2 4.2 Z" fill="#b4b4b4"/></svg>
<svg style="left:481px;top:432.3px" width="11" height="11" viewBox="0 0 13 13"><path d="M2 1.2 A3.6 3.6 0 0 1 7.6 5.2 L12.6 10.2 A1.3 1.3 0 0 1 10.6 12.2 L5.6 7.2 A3.6 3.6 0 0 1 0.8 3 L3.4 5 L5 3.6 Z" fill="#cfcfcf"/></svg>
<div class="a" style="left:543px;top:446px;width:474px;height:145px;background:#212121;"></div>
<div class="a" style="left:357px;top:471px;width:186px;height:120px;background:#2a2a2a;"></div>
<div class="a" style="left:357px;top:471px;width:49.5px;height:120px;background:#262626;"></div>
<div class="a" style="left:357px;top:470.5px;width:642px;height:1px;background:#2d2d2d;"></div>
<div class="a" style="left:357px;top:490.5px;width:642px;height:1px;background:#2d2d2d;"></div>
<div class="a" style="left:357px;top:510.5px;width:642px;height:1px;background:#2d2d2d;"></div>
<div class="a" style="left:357px;top:531px;width:651px;height:4px;background:#2a2a2a;"></div>
<div class="a" style="left:543px;top:425px;width:1px;height:166px;background:#2b2b2b;"></div>
<div class="t sc" style="left:544px;top:424.7px;font-size:8.7px;color:#b4b4b4;">;00;00</div>
<div class="t sc" style="left:582px;top:424.7px;font-size:8.7px;color:#b4b4b4;">00;00;14;29</div>
<div class="t sc" style="left:641px;top:424.7px;font-size:8.7px;color:#b4b4b4;">00;00;29;29</div>
<div class="t sc" style="left:700px;top:424.7px;font-size:8.7px;color:#b4b4b4;">00;00;44;28</div>
<div class="t sc" style="left:760px;top:424.7px;font-size:8.7px;color:#b4b4b4;">00;00;59;28</div>
<div class="t sc" style="left:820px;top:424.7px;font-size:8.7px;color:#b4b4b4;">00;01;14;29</div>
<div class="t sc" style="left:879px;top:424.7px;font-size:8.7px;color:#b4b4b4;">00;01;29;29</div>
<div class="t sc" style="left:938px;top:424.7px;font-size:8.7px;color:#b4b4b4;">00;01;44;28</div>
<div class="a" style="left:544px;top:439px;width:454px;height:8px;background:repeating-linear-gradient(to right,#383838 0,#383838 1px,transparent 1px,transparent 2.976px)"></div>
<div class="a" style="left:544px;top:436px;width:454px;height:6px;background:repeating-linear-gradient(to right,#454545 0,#454545 1px,transparent 1px,transparent 59.52px)"></div>
<div class="a" style="left:553px;top:411px;width:1px;height:32px;background:#3e3e3e;"></div>
<div class="a" style="left:544px;top:443.3px;width:175px;height:2.5px;background:#cccb22;"></div>
<div class="a" style="left:543px;top:511px;width:176px;height:20px;background:#1a1a1a;"></div>
<div class="a" style="left:543px;top:511.5px;width:66.5px;height:19px;background:#ab94e4;border-radius:2px 2px 0 0"></div>
<svg style="left:543px;top:511.5px" width="4" height="4" viewBox="0 0 4 4"><path d="M0 0 H3.5 L0 3.5 Z" fill="#efefef"/></svg>
<svg style="left:605.5px;top:511.5px" width="4" height="4" viewBox="0 0 4 4"><path d="M4 0 H0.5 L4 3.5 Z" fill="#efefef"/></svg>
<div class="a" style="left:610.5px;top:511.5px;width:71.5px;height:19px;background:#ab94e4;border-radius:2px 2px 0 0"></div>
<svg style="left:610.5px;top:511.5px" width="4" height="4" viewBox="0 0 4 4"><path d="M0 0 H3.5 L0 3.5 Z" fill="#efefef"/></svg>
<svg style="left:678.0px;top:511.5px" width="4" height="4" viewBox="0 0 4 4"><path d="M4 0 H0.5 L4 3.5 Z" fill="#efefef"/></svg>
<div class="a" style="left:683px;top:511.5px;width:35px;height:19px;background:#ab94e4;border-radius:2px 2px 0 0"></div>
<svg style="left:683px;top:511.5px" width="4" height="4" viewBox="0 0 4 4"><path d="M0 0 H3.5 L0 3.5 Z" fill="#efefef"/></svg>
<svg style="left:714px;top:511.5px" width="4" height="4" viewBox="0 0 4 4"><path d="M4 0 H0.5 L4 3.5 Z" fill="#efefef"/></svg>
<div class="a" style="left:551.5px;top:514px;width:9px;height:9px;background:#e6c420;border-radius:1px"></div>
<div class="t" style="left:552.7px;top:514.3px;font-size:7.5px;color:#4a3a00;font-family:'Liberation Serif',serif;font-style:italic;font-weight:bold">fx</div>
<div class="t cj" style="left:566.5px;top:513.5px;font-size:9.5px;color:#4d4380;letter-spacing:-0.2px">全国一卷</div>
<div class="a" style="left:619px;top:514px;width:9px;height:9px;background:#55503e;border-radius:1px"></div>
<div class="t" style="left:620.2px;top:514.3px;font-size:7.5px;color:#e0cc50;font-family:'Liberation Serif',serif;font-style:italic;font-weight:bold">fx</div>
<div class="a" style="left:691px;top:514px;width:9px;height:9px;background:#55503e;border-radius:1px"></div>
<div class="t" style="left:692.2px;top:514.3px;font-size:7.5px;color:#e0cc50;font-family:'Liberation Serif',serif;font-style:italic;font-weight:bold">fx</div>
<div class="t cj" style="left:635px;top:513.5px;font-size:9.5px;color:#4d4380;letter-spacing:-0.9px">上海卷数学</div>
<div class="a" style="left:543px;top:531px;width:176px;height:60px;background:#161616;"></div>
<div class="a" style="left:543px;top:533px;width:175px;height:58px;background:#197052;"></div>
<svg style="left:553px;top:533px;overflow:hidden" width="165" height="33" viewBox="0 0 165 33"><rect width="165" height="33" fill="#197052"/><path d="M0 33 L0.0 12.3 L0.6 8.9 L1.2 12.3 L1.9 12.6 L2.6 15.3 L3.3 12.6 L4.4 12.2 L5.1 22.0 L5.8 12.2 L6.5 12.9 L7.1 8.4 L7.7 12.9 L8.1 13.0 L9.5 13.2 L10.2 21.3 L10.9 13.2 L11.7 12.6 L12.4 21.6 L13.1 12.6 L13.9 13.3 L15.4 12.6 L16.9 13.3 L17.6 16.9 L18.3 13.3 L18.8 13.9 L19.4 9.4 L20.0 13.9 L20.5 13.5 L21.1 10.1 L21.7 13.5 L22.5 13.7 L24.0 14.0 L24.9 14.7 L26.2 14.0 L26.9 22.6 L27.6 14.0 L28.4 13.2 L29.1 22.0 L29.8 13.2 L31.0 12.1 L31.9 12.6 L32.7 12.3 L33.4 20.2 L34.1 12.3 L34.7 13.1 L36.3 12.6 L37.0 19.6 L37.7 12.6 L38.1 12.0 L38.7 7.6 L39.3 12.0 L39.7 11.1 L41.2 12.4 L41.9 18.4 L42.6 12.4 L43.4 12.8 L44.7 13.4 L45.3 9.8 L45.9 13.4 L46.7 12.7 L47.4 22.4 L48.1 12.7 L48.9 12.7 L49.6 18.4 L50.3 12.7 L51.1 12.0 L52.0 12.3 L52.6 7.6 L53.2 12.3 L53.7 12.0 L54.6 12.6 L55.7 13.0 L56.4 18.3 L57.1 13.0 L57.7 12.3 L58.8 13.1 L59.5 19.9 L60.2 13.1 L61.2 12.6 L61.9 21.1 L62.6 12.6 L63.1 12.0 L63.7 7.3 L64.3 12.0 L64.6 11.9 L65.3 20.5 L66.0 11.9 L66.7 12.7 L67.4 17.8 L68.1 12.7 L69.0 13.3 L69.6 10.5 L70.2 13.3 L70.6 13.1 L71.3 21.6 L72.0 13.1 L73.1 12.4 L73.8 20.9 L74.5 12.4 L75.3 13.0 L76.0 16.6 L76.7 13.0 L77.3 13.4 L78.0 18.5 L78.7 13.4 L79.4 13.0 L80.0 7.4 L80.6 13.0 L81.0 12.6 L82.6 12.7 L83.6 12.9 L84.8 12.2 L85.5 16.5 L86.2 12.2 L86.5 12.5 L87.2 21.0 L87.9 12.5 L88.3 13.9 L89.8 12.9 L91.2 12.8 L91.9 20.2 L92.6 12.8 L93.4 12.7 L94.4 12.1 L95.9 12.0 L96.6 18.5 L97.3 12.0 L98.3 12.2 L99.7 12.4 L100.4 19.6 L101.1 12.4 L102.2 11.7 L102.9 16.3 L103.6 11.7 L104.4 11.8 L105.0 6.7 L105.6 11.8 L105.9 11.2 L106.6 14.8 L107.3 11.2 L107.7 11.8 L108.9 12.2 L109.6 17.3 L110.3 12.2 L111.1 12.4 L111.8 16.5 L112.5 12.4 L113.1 12.1 L114.2 11.3 L114.9 16.6 L115.6 11.3 L116.5 12.2 L117.1 7.0 L117.7 12.2 L118.4 12.1 L119.1 18.4 L119.8 12.1 L120.8 12.1 L121.7 11.6 L122.9 12.9 L124.0 12.7 L125.2 12.5 L126.7 13.2 L127.9 11.2 L128.8 12.7 L129.5 16.0 L130.2 12.7 L130.6 13.3 L131.3 16.1 L132.0 13.3 L133.1 12.7 L134.5 13.7 L135.4 13.5 L136.0 8.7 L136.6 13.5 L137.0 13.0 L138.0 13.0 L139.0 13.1 L140.1 12.4 L140.7 9.1 L141.3 12.4 L141.9 11.7 L142.5 5.9 L143.1 11.7 L143.7 12.4 L144.4 20.1 L145.1 12.4 L146.0 12.8 L146.6 8.9 L147.2 12.8 L148.0 13.4 L148.7 16.7 L149.4 13.4 L150.4 13.9 L151.0 10.2 L151.6 13.9 L152.4 12.9 L153.1 17.0 L153.8 12.9 L154.6 12.5 L155.3 20.1 L156.0 12.5 L157.1 12.0 L158.6 12.4 L159.3 16.6 L160.0 12.4 L160.3 12.4 L160.9 9.7 L161.5 12.4 L162.1 11.6 L163.7 12.2 L165 12.2 L165 33 Z" fill="#28d496"/></svg>
<svg style="left:553px;top:568px;overflow:hidden" width="165" height="23" viewBox="0 0 165 23"><rect width="165" height="23" fill="#197052"/><path d="M0 23 L0.0 10.0 L1.6 9.0 L2.7 10.8 L3.6 9.8 L4.3 14.4 L5.0 9.8 L5.8 9.0 L6.5 12.3 L7.2 9.0 L8.4 9.4 L9.1 15.3 L9.8 9.4 L10.2 9.5 L10.9 11.3 L11.6 9.5 L12.7 9.0 L13.4 15.9 L14.1 9.0 L15.2 8.9 L16.5 8.9 L18.1 9.2 L18.8 12.9 L19.5 9.2 L19.9 8.8 L20.6 12.2 L21.3 8.8 L22.2 8.0 L23.2 9.0 L23.8 6.7 L24.4 9.0 L25.0 9.3 L25.7 16.1 L26.4 9.3 L26.8 8.8 L28.2 8.5 L29.0 8.4 L30.4 9.3 L31.5 8.8 L32.9 9.0 L34.5 9.1 L35.2 14.0 L35.9 9.1 L37.0 9.0 L38.1 8.8 L38.8 11.0 L39.5 8.8 L39.9 8.6 L40.7 9.8 L41.3 7.3 L41.9 9.8 L42.4 9.6 L43.5 8.3 L44.7 9.5 L45.4 15.0 L46.1 9.5 L47.3 8.9 L48.4 8.7 L49.6 10.5 L50.8 9.5 L51.8 9.3 L52.5 13.1 L53.2 9.3 L54.4 9.8 L55.4 9.1 L56.1 14.9 L56.8 9.1 L57.9 9.4 L59.3 9.0 L60.6 9.0 L61.2 5.5 L61.8 9.0 L62.6 9.0 L63.9 8.3 L64.5 6.2 L65.1 8.3 L65.9 8.8 L67.3 8.9 L68.8 9.1 L70.1 9.4 L71.3 9.6 L72.5 9.6 L73.5 9.8 L74.6 9.8 L76.0 8.9 L76.7 13.0 L77.4 8.9 L78.3 8.8 L79.1 8.8 L79.8 10.9 L80.5 8.8 L80.9 8.7 L81.6 11.5 L82.3 8.7 L82.6 8.8 L83.2 5.7 L83.8 8.8 L84.6 7.8 L85.7 8.5 L86.3 6.8 L86.9 8.5 L87.8 8.6 L88.5 13.5 L89.2 8.6 L89.5 8.8 L90.2 13.6 L90.9 8.8 L92.1 9.3 L92.7 5.7 L93.3 9.3 L94.1 9.1 L94.8 14.0 L95.5 9.1 L96.3 9.9 L97.3 10.0 L98.0 12.4 L98.7 10.0 L99.6 9.9 L100.3 15.0 L101.0 9.9 L102.1 9.6 L102.7 7.6 L103.3 9.6 L103.8 10.0 L104.5 16.7 L105.2 10.0 L106.3 9.9 L107.0 16.7 L107.7 9.9 L108.4 9.6 L109.1 16.4 L109.8 9.6 L110.6 9.2 L111.2 7.5 L111.8 9.2 L112.5 9.1 L113.2 14.9 L113.9 9.1 L115.0 8.5 L115.6 6.4 L116.2 8.5 L117.1 9.1 L117.8 12.3 L118.5 9.1 L118.9 9.7 L119.6 14.7 L120.3 9.7 L121.1 10.1 L122.0 9.9 L122.7 14.5 L123.4 9.9 L124.0 9.4 L124.6 6.8 L125.2 9.4 L125.7 8.9 L126.7 10.1 L128.0 8.7 L129.2 9.1 L130.8 9.0 L131.4 5.3 L132.0 9.0 L132.4 8.1 L133.9 9.2 L134.5 7.0 L135.1 9.2 L135.9 9.7 L136.6 14.0 L137.3 9.7 L138.1 9.5 L138.8 12.2 L139.5 9.5 L140.3 9.8 L141.0 12.8 L141.7 9.8 L142.8 9.2 L144.1 10.7 L145.0 10.4 L145.7 15.5 L146.4 10.4 L147.5 10.3 L148.2 13.6 L148.9 10.3 L150.1 9.4 L151.0 9.6 L151.7 12.0 L152.4 9.6 L153.0 8.9 L153.7 13.7 L154.4 8.9 L155.4 9.5 L156.1 13.5 L156.8 9.5 L157.4 9.5 L158.0 5.6 L158.6 9.5 L159.1 8.3 L160.5 9.1 L161.7 8.4 L163.2 8.9 L163.9 11.9 L164.6 8.9 L165 8.9 L165 23 Z" fill="#28d496"/></svg>
<div class="a" style="left:543px;top:566px;width:175px;height:1px;background:#8ccdb3;"></div>
<div class="a" style="left:716.5px;top:533px;width:1.5px;height:58px;background:#197052;"></div>
<div class="a" style="left:544px;top:553px;width:8px;height:12.5px;background:#134f3c;"></div>
<div class="t sc" style="left:545.5px;top:556px;font-size:7px;color:#3f9a7c;font-weight:bold">L</div>
<div class="a" style="left:551px;top:536.5px;width:10px;height:9.5px;background:#8a8a80;border-radius:1px"></div>
<div class="a" style="left:551.7px;top:537.2px;width:8.6px;height:8.1px;background:#4e4e46;border-radius:1px"></div>
<div class="t" style="left:552.9000000000001px;top:537.5px;font-size:7.5px;color:#d8c860;font-family:'Liberation Serif',serif;font-style:italic;font-weight:bold">fx</div>
<svg style="left:543px;top:533px" width="4" height="4" viewBox="0 0 4 4"><path d="M0 0 H3.5 L0 3.5 Z" fill="#efefef"/></svg>
<div class="a" style="left:683px;top:440px;width:2px;height:151px;background:#3a80d4;"></div>
<svg style="left:679.8px;top:434.5px" width="9" height="9" viewBox="0 0 9 9"><path d="M0 1.2 Q0 0 1.2 0 H7.2 Q8.4 0 8.4 1.2 V5 L5.4 8.6 H3 L0 5 Z" fill="#2d8ceb"/></svg>
<div class="a" style="left:999.3px;top:447px;width:8.4px;height:84px;background:#2c2c2c;border-radius:4px"></div>
<div class="a" style="left:999.3px;top:535px;width:8.4px;height:56px;background:#2c2c2c;border-radius:4px 4px 0 0"></div>
<svg style="left:999.5px;top:449px" width="8" height="8" viewBox="0 0 8 8"><circle cx="4" cy="4" r="2.9" fill="#232323" stroke="#a0a0a0" stroke-width="1.9"/></svg>
<svg style="left:999.5px;top:522px" width="8" height="8" viewBox="0 0 8 8"><circle cx="4" cy="4" r="2.9" fill="#232323" stroke="#a0a0a0" stroke-width="1.9"/></svg>
<svg style="left:999.5px;top:535px" width="8" height="8" viewBox="0 0 8 8"><circle cx="4" cy="4" r="2.9" fill="#232323" stroke="#a0a0a0" stroke-width="1.9"/></svg>
<svg style="left:395px;top:476px" width="8" height="9" viewBox="0 0 8 9"><rect x="0.2" y="3.8" width="7.2" height="5" rx="0.6" fill="#d8d8d8"/><path d="M1.4 4 V2.2 A1.6 1.6 0 0 1 4.6 2.2 V2.9" fill="none" stroke="#d8d8d8" stroke-width="1.2"/><rect x="3" y="5.3" width="1.6" height="2" fill="#2a2a2a"/></svg>
<div class="t sc" style="left:414.5px;top:478.6px;font-size:7.5px;color:#808080;">V3</div>
<svg style="left:438.5px;top:477.2px" width="10" height="8" viewBox="0 0 10 8"><rect x="0.6" y="0.6" width="6" height="2.4" fill="none" stroke="#d8d8d8" stroke-width="1.1"/><rect x="0.6" y="4.6" width="6" height="2.4" fill="none" stroke="#d8d8d8" stroke-width="1.1"/><path d="M6.6 1.8 H9.2 V5.8 H6.6" fill="none" stroke="#d8d8d8" stroke-width="1.1"/></svg>
<svg style="left:459px;top:478.2px" width="11" height="7" viewBox="0 0 11 7"><path d="M0.2 3.5 Q5.3 -2.2 10.4 3.5 Q5.3 9.2 0.2 3.5 Z" fill="#d8d8d8"/><circle cx="5.3" cy="3.5" r="2.1" fill="#2a2a2a"/><circle cx="5.3" cy="3.5" r="1" fill="#d8d8d8"/></svg>
<svg style="left:395px;top:496px" width="8" height="9" viewBox="0 0 8 9"><rect x="0.2" y="3.8" width="7.2" height="5" rx="0.6" fill="#d8d8d8"/><path d="M1.4 4 V2.2 A1.6 1.6 0 0 1 4.6 2.2 V2.9" fill="none" stroke="#d8d8d8" stroke-width="1.2"/><rect x="3" y="5.3" width="1.6" height="2" fill="#2a2a2a"/></svg>
<div class="t sc" style="left:414.5px;top:498.6px;font-size:7.5px;color:#808080;">V2</div>
<svg style="left:438.5px;top:497.2px" width="10" height="8" viewBox="0 0 10 8"><rect x="0.6" y="0.6" width="6" height="2.4" fill="none" stroke="#d8d8d8" stroke-width="1.1"/><rect x="0.6" y="4.6" width="6" height="2.4" fill="none" stroke="#d8d8d8" stroke-width="1.1"/><path d="M6.6 1.8 H9.2 V5.8 H6.6" fill="none" stroke="#d8d8d8" stroke-width="1.1"/></svg>
<svg style="left:459px;top:498.2px" width="11" height="7" viewBox="0 0 11 7"><path d="M0.2 3.5 Q5.3 -2.2 10.4 3.5 Q5.3 9.2 0.2 3.5 Z" fill="#d8d8d8"/><circle cx="5.3" cy="3.5" r="2.1" fill="#2a2a2a"/><circle cx="5.3" cy="3.5" r="1" fill="#d8d8d8"/></svg>
<div class="a" style="left:406.5px;top:511.5px;width:25.5px;height:19px;background:#0d5c9c;"></div>
<svg style="left:395px;top:516px" width="8" height="9" viewBox="0 0 8 9"><rect x="0.2" y="3.8" width="7.2" height="5" rx="0.6" fill="#d8d8d8"/><path d="M1.4 4 V2.2 A1.6 1.6 0 0 1 4.6 2.2 V2.9" fill="none" stroke="#d8d8d8" stroke-width="1.2"/><rect x="3" y="5.3" width="1.6" height="2" fill="#2a2a2a"/></svg>
<div class="t sc" style="left:414.5px;top:518.6px;font-size:7.5px;color:#8fb8dc;">V1</div>
<svg style="left:438.5px;top:517.2px" width="10" height="8" viewBox="0 0 10 8"><rect x="0.6" y="0.6" width="6" height="2.4" fill="none" stroke="#d8d8d8" stroke-width="1.1"/><rect x="0.6" y="4.6" width="6" height="2.4" fill="none" stroke="#d8d8d8" stroke-width="1.1"/><path d="M6.6 1.8 H9.2 V5.8 H6.6" fill="none" stroke="#d8d8d8" stroke-width="1.1"/></svg>
<svg style="left:459px;top:518.2px" width="11" height="7" viewBox="0 0 11 7"><path d="M0.2 3.5 Q5.3 -2.2 10.4 3.5 Q5.3 9.2 0.2 3.5 Z" fill="#d8d8d8"/><circle cx="5.3" cy="3.5" r="2.1" fill="#2a2a2a"/><circle cx="5.3" cy="3.5" r="1" fill="#d8d8d8"/></svg>
<div class="a" style="left:365px;top:534px;width:26px;height:57px;background:#0d5c9c;"></div>
<div class="a" style="left:406.5px;top:534px;width:25.5px;height:57px;background:#0d5c9c;"></div>
<div class="t sc" style="left:373.5px;top:557.5px;font-size:7.5px;color:#62a0d6;">A1</div>
<div class="t sc" style="left:414.5px;top:557.5px;font-size:7.5px;color:#62a0d6;">A1</div>
<svg style="left:395px;top:554.5px" width="8" height="9" viewBox="0 0 8 9"><rect x="0.2" y="3.8" width="7.2" height="5" rx="0.6" fill="#d8d8d8"/><path d="M1.4 4 V2.2 A1.6 1.6 0 0 1 4.6 2.2 V2.9" fill="none" stroke="#d8d8d8" stroke-width="1.2"/><rect x="3" y="5.3" width="1.6" height="2" fill="#2a2a2a"/></svg>
<svg style="left:438.5px;top:539.5px" width="10" height="8" viewBox="0 0 10 8"><rect x="0.6" y="0.6" width="6" height="2.4" fill="none" stroke="#d8d8d8" stroke-width="1.1"/><rect x="0.6" y="4.6" width="6" height="2.4" fill="none" stroke="#d8d8d8" stroke-width="1.1"/><path d="M6.6 1.8 H9.2 V5.8 H6.6" fill="none" stroke="#d8d8d8" stroke-width="1.1"/></svg>
<div class="t sc" style="left:461px;top:540.5px;font-size:8.5px;color:#a8a8a8;">M</div>
<div class="t sc" style="left:482.5px;top:540.5px;font-size:8.5px;color:#a8a8a8;">S</div>
<svg style="left:503px;top:537.5px" width="8" height="13" viewBox="0 0 8 13"><rect x="2" y="0.5" width="4" height="8" rx="2" fill="#444"/><path d="M0.7 6 Q0.7 10 4 10 Q7.3 10 7.3 6 M4 10 V12.5" stroke="#444" stroke-width="1" fill="none"/></svg>
<div class="t cj" style="left:436px;top:558.5px;font-size:10px;color:#858585;">音频 1</div>
<svg style="left:438.3px;top:579.5px" width="9" height="10" viewBox="0 0 9 10"><path d="M3.4 0.6 L6.2 4.2 L3.4 7.8 L0.6 4.2 Z" fill="none" stroke="#d0d0d0" stroke-width="1.3" stroke-linejoin="round"/><path d="M6.5 8.6 H8.5" stroke="#d0d0d0" stroke-width="1.2"/></svg>
<div class="a" style="left:449px;top:579.3px;width:102px;height:12px;background:#f2f2f2;"></div>
<div class="a" style="left:450.4px;top:580.7px;width:14.6px;height:11px;background:#9cc8f0;"></div>
<svg style="left:455px;top:585px" width="7" height="6" viewBox="0 0 7 6"><circle cx="3.3" cy="3.6" r="2.4" fill="#1a2a3a"/></svg>
<div class="t sc" style="left:470.5px;top:584.3px;font-size:9.8px;color:#111;">剪辑关键帧</div>
<div class="a" style="left:1018px;top:388px;width:3px;height:203px;background:#131313;"></div>
<div class="a" style="left:1021px;top:388px;width:59px;height:203px;background:#232323;"></div>
<div class="a" style="left:1030px;top:408px;width:23px;height:183px;background:#141414;"></div>
<div class="a" style="left:1031px;top:409px;width:21px;height:8px;background:#232323;"></div>
<div class="a" style="left:1041px;top:408px;width:1px;height:183px;background:#141414;"></div>
<div class="a" style="left:1031px;top:418px;width:21px;height:173px;background:#1c1c1c;"></div>
<div class="a" style="left:1041px;top:418px;width:1px;height:173px;background:#141414;"></div>
<div class="a" style="left:1052px;top:417px;width:2px;height:174px;background:repeating-linear-gradient(to bottom,#8a8a8a 0,#8a8a8a 1px,transparent 1px,transparent 3.25px);opacity:.55"></div>
<div class="a" style="left:1052px;top:417px;width:3px;height:1px;background:#7c7c7c;"></div>
<div class="t sc" style="left:1057.5px;top:413.5px;font-size:7.5px;color:#7c7c7c;">0</div>
<div class="a" style="left:1052px;top:436px;width:3px;height:1px;background:#7c7c7c;"></div>
<div class="t sc" style="left:1057.5px;top:433.0px;font-size:7.5px;color:#7c7c7c;">-6</div>
<div class="a" style="left:1052px;top:456px;width:3px;height:1px;background:#7c7c7c;"></div>
<div class="t sc" style="left:1057.5px;top:452.5px;font-size:7.5px;color:#7c7c7c;">-12</div>
<div class="a" style="left:1052px;top:476px;width:3px;height:1px;background:#7c7c7c;"></div>
<div class="t sc" style="left:1057.5px;top:472.0px;font-size:7.5px;color:#7c7c7c;">-18</div>
<div class="a" style="left:1052px;top:495px;width:3px;height:1px;background:#7c7c7c;"></div>
<div class="t sc" style="left:1057.5px;top:491.5px;font-size:7.5px;color:#7c7c7c;">-24</div>
<div class="a" style="left:1052px;top:514px;width:3px;height:1px;background:#7c7c7c;"></div>
<div class="t sc" style="left:1057.5px;top:511.0px;font-size:7.5px;color:#7c7c7c;">-30</div>
<div class="a" style="left:1052px;top:534px;width:3px;height:1px;background:#7c7c7c;"></div>
<div class="t sc" style="left:1057.5px;top:530.5px;font-size:7.5px;color:#7c7c7c;">-36</div>
<div class="a" style="left:1052px;top:554px;width:3px;height:1px;background:#7c7c7c;"></div>
<div class="t sc" style="left:1057.5px;top:550.0px;font-size:7.5px;color:#7c7c7c;">-42</div>
<div class="a" style="left:1052px;top:573px;width:3px;height:1px;background:#7c7c7c;"></div>
<div class="t sc" style="left:1057.5px;top:569.5px;font-size:7.5px;color:#7c7c7c;">-48</div>
<div class="a" style="left:1052px;top:592px;width:3px;height:1px;background:#7c7c7c;"></div>
<div class="t sc" style="left:1057.5px;top:589.0px;font-size:7.5px;color:#7c7c7c;">-54</div>
<div class="a" style="left:1077px;top:0px;width:1px;height:490px;background:#1c1c1c;"></div>
<div class="a" style="left:1078px;top:0px;width:1px;height:490px;background:#858585;"></div>
<div class="a" style="left:1079px;top:0px;width:1px;height:490px;background:#e8e8e8;"></div>
<div class="a" style="left:1077px;top:490px;width:3px;height:101px;background:#161616;"></div>
<div class="a" style="left:1078px;top:32px;width:2px;height:7.5px;background:#484848;"></div>
</body></html>
